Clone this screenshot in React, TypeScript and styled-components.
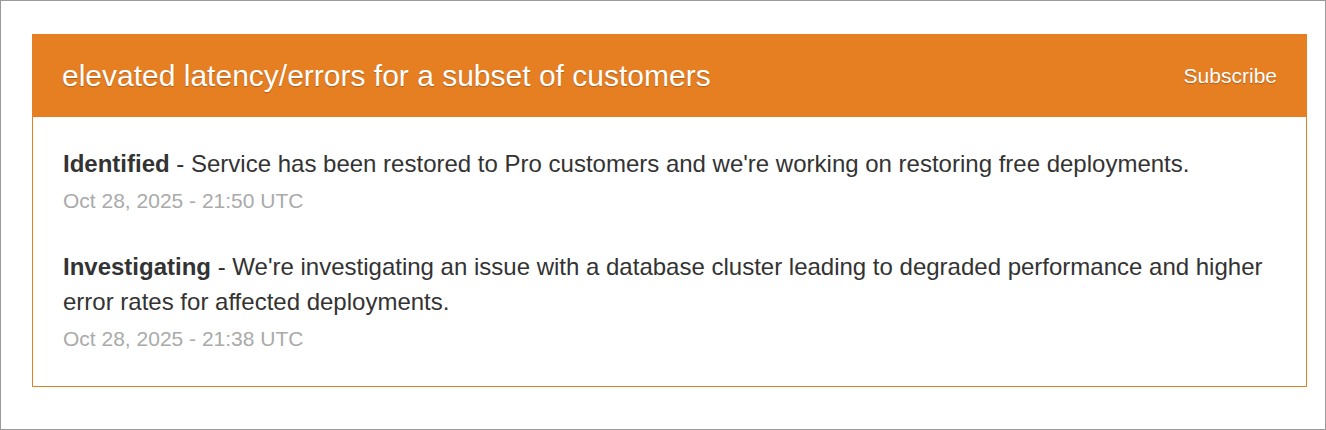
import React from 'react';
import styled, { createGlobalStyle } from 'styled-components';

const GlobalStyle = createGlobalStyle`
	html, body {
		margin: 0;
		padding: 0;
		background: #fff;
	}
	body {
		font-family: "Liberation Sans", Arial, sans-serif;
	}
`;

const Frame = styled.div`
	box-sizing: border-box;
	width: 1326px;
	height: 430px;
	border: 1px solid #9a9a9a;
	padding: 33px 18px 0 31px;
`;

const Card = styled.section`
	border: 1px solid #e67e22;
	background: #fff;
`;

const Header = styled.header`
	display: flex;
	align-items: center;
	justify-content: space-between;
	height: 82px;
	padding: 0 29px;
	background: #e67e22;
	color: #fff;
	text-shadow: 0 1px 1px rgba(0, 0, 0, 0.25);
`;

const Title = styled.h1`
	margin: 0;
	font-size: 30px;
	font-weight: 400;
`;

const SubscribeLink = styled.a`
	color: #fff;
	font-size: 21px;
	text-decoration: none;
	cursor: pointer;
`;

const Body = styled.div`
	padding: 29px 30px 33px;
`;

const Update = styled.div`
	& + & {
		margin-top: 34px;
	}
`;

const Message = styled.p`
	margin: 0;
	font-size: 24px;
	line-height: 35px;
	color: #333;

	& > strong {
		font-weight: 700;
	}
`;

const Timestamp = styled.div`
	margin-top: 6px;
	font-size: 21px;
	line-height: 28px;
	color: #aaa;
`;

const updates = [
	{
		status: 'Identified',
		body: "Service has been restored to Pro customers and we're working on restoring free deployments.",
		time: 'Oct 28, 2025 - 21:50 UTC',
	},
	{
		status: 'Investigating',
		body: "We're investigating an issue with a database cluster leading to degraded performance and higher error rates for affected deployments.",
		time: 'Oct 28, 2025 - 21:38 UTC',
	},
];

const App: React.FC = () => {
	return (
		<>
			<GlobalStyle />
			<Frame>
				<Card>
					<Header>
						<Title>elevated latency/errors for a subset of customers</Title>
						<SubscribeLink>Subscribe</SubscribeLink>
					</Header>
					<Body>
						{updates.map((u) => (
							<Update key={u.time}>
								<Message>
									<strong>{u.status}</strong> - {u.body}
								</Message>
								<Timestamp>{u.time}</Timestamp>
							</Update>
						))}
					</Body>
				</Card>
			</Frame>
		</>
	);
};

export default App;
